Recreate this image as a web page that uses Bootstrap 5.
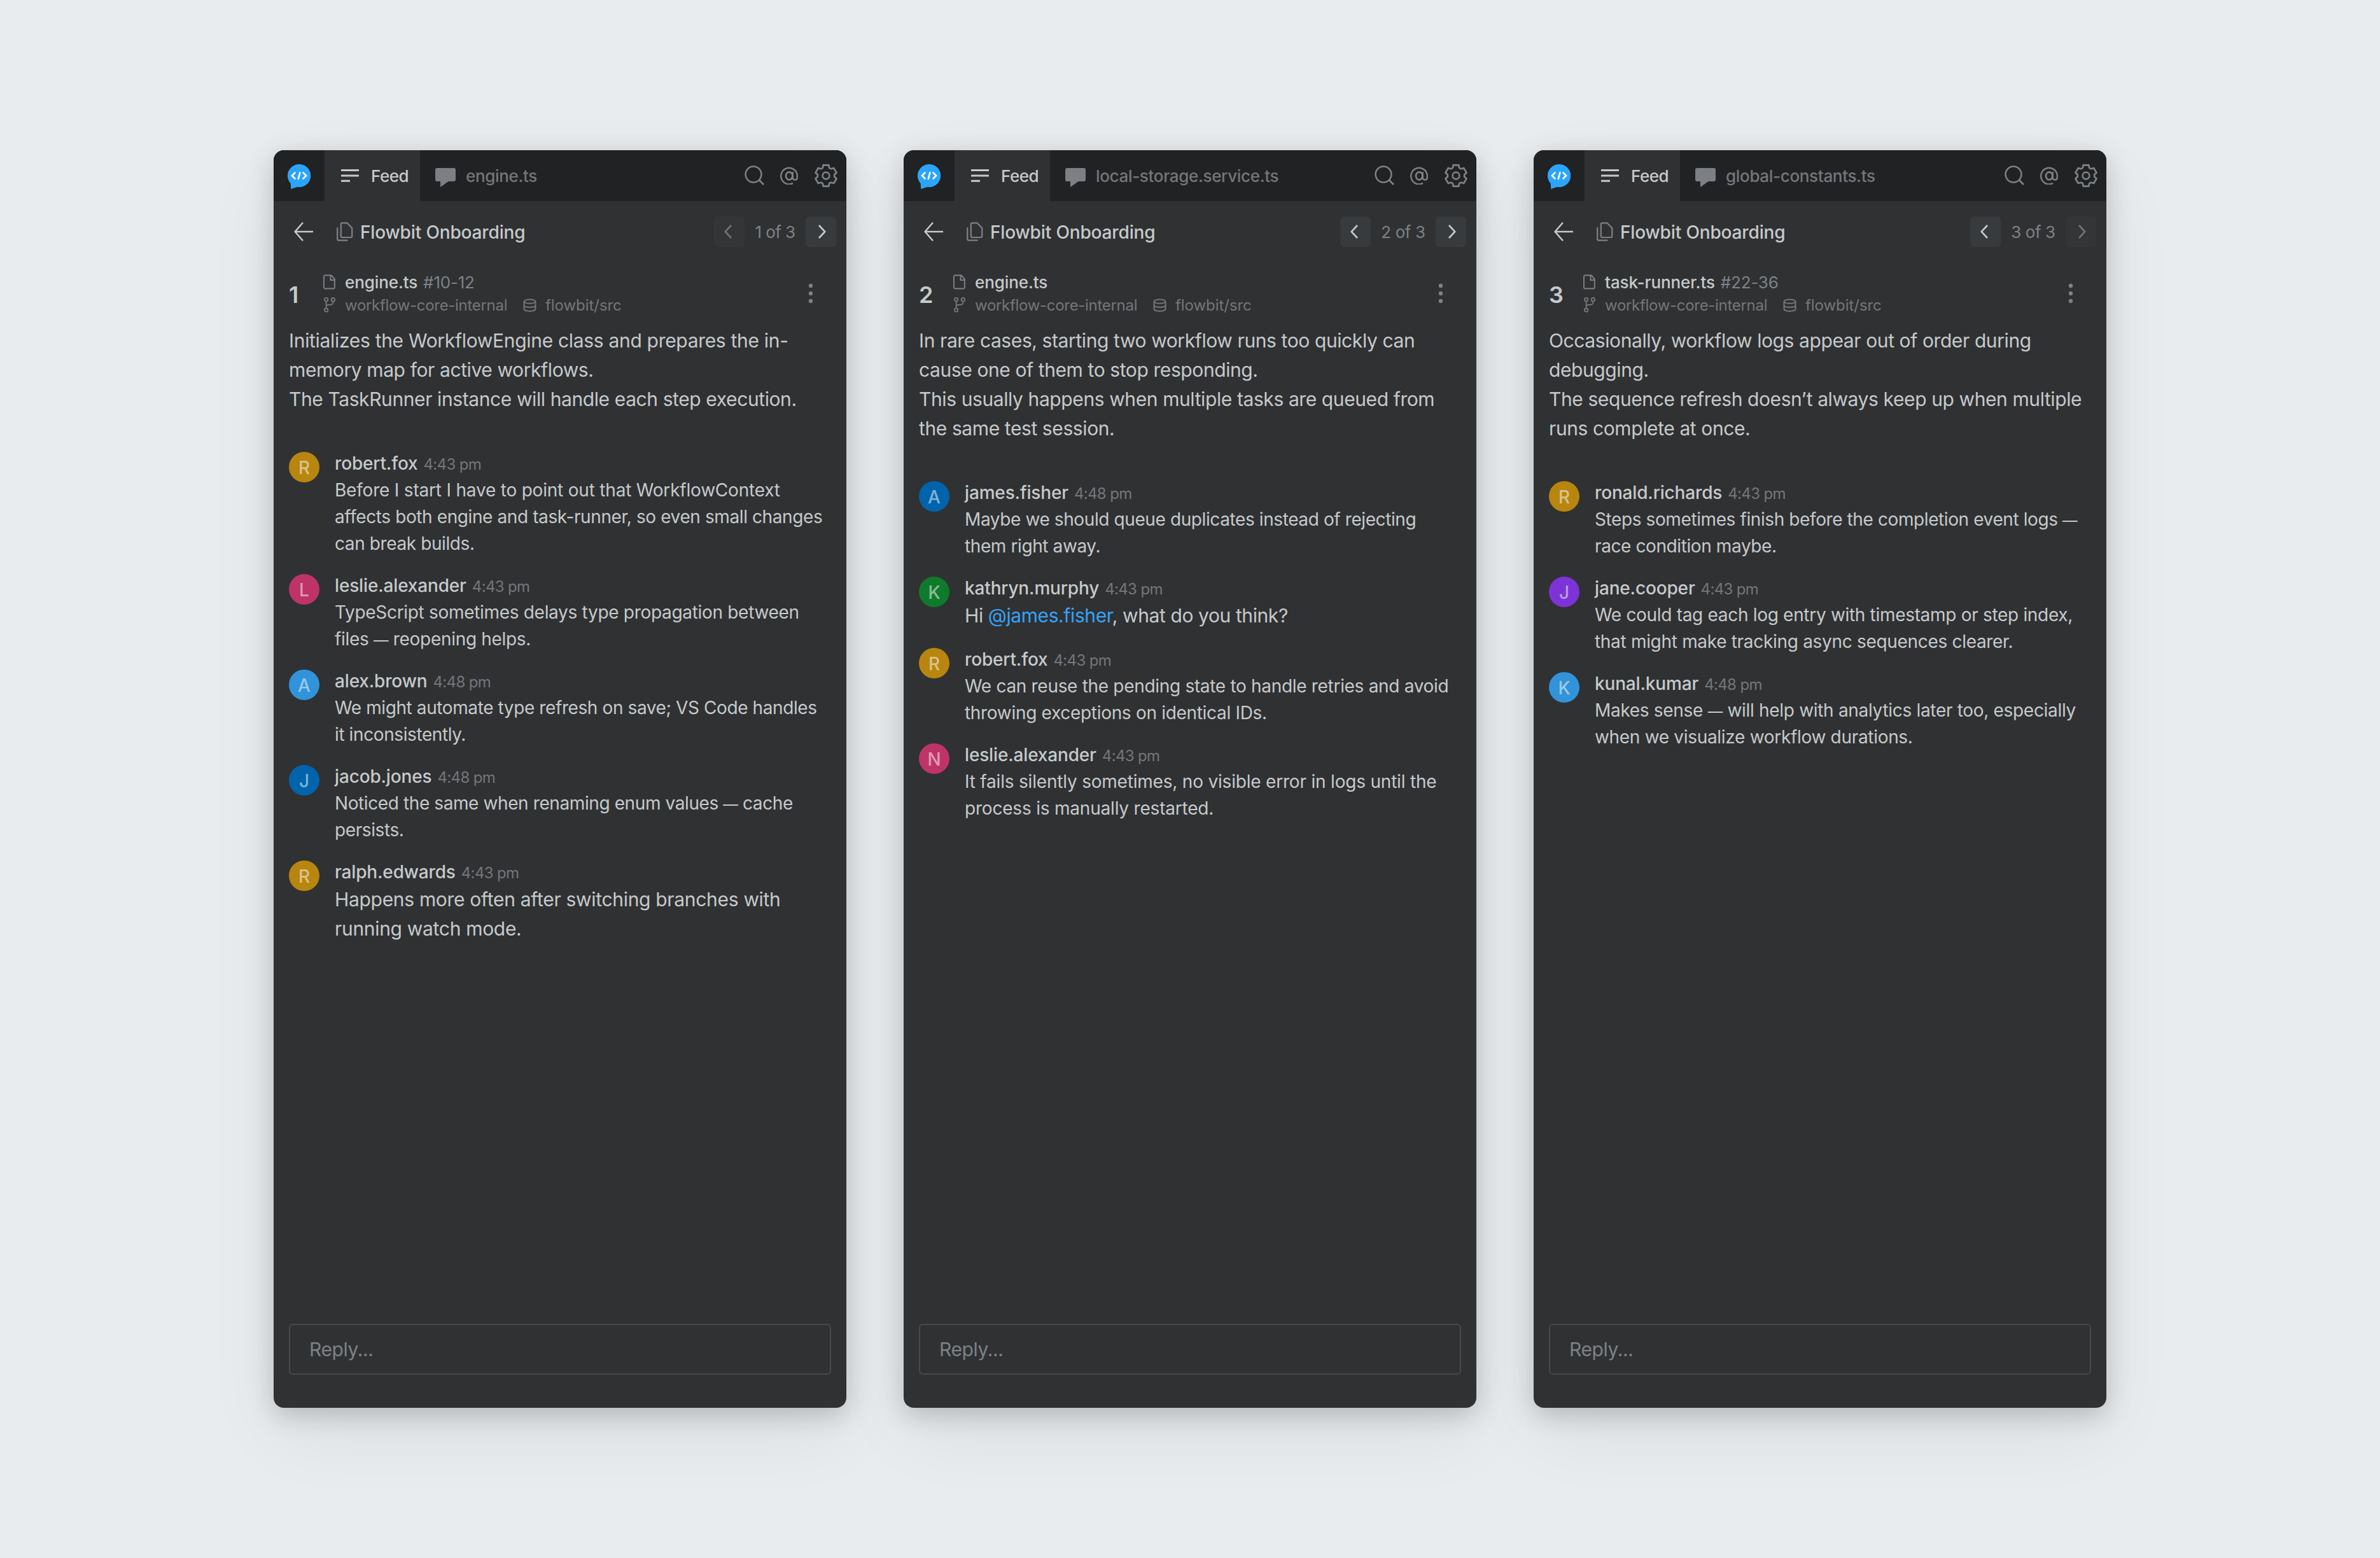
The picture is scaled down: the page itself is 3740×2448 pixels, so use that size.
<!DOCTYPE html>
<html lang="en" data-bs-theme="dark">
<head>
<meta charset="utf-8">
<meta name="viewport" content="width=device-width, initial-scale=1">
<title>Flowbit Onboarding</title>
<link href="https://cdn.jsdelivr.net/npm/bootstrap@5.3.0/dist/css/bootstrap.min.css" rel="stylesheet">
<style>
  :root { --fg: #c5cacb; --dim: #7c8286; --dimmer: #72777a; --panel: #303133; --bar: #212224; }
  body { background: #e8ecef; font-family: Inter, "Liberation Sans", sans-serif; color: var(--fg); min-height: 2448px; }
  svg { display: block; flex: none; overflow: visible; fill: none; stroke: currentColor; }
  .board { gap: 90px; padding-top: 236px; }
  .panel { width: 900px; height: 1976px; background: var(--panel); border-radius: 16px;
    box-shadow: 0 12px 40px rgba(0,0,0,.19), 0 40px 120px rgba(0,0,0,.06); white-space: nowrap; }
  .topbar { height: 80px; background: var(--bar); border-radius: 16px 16px 0 0; font-size: 26px; font-weight: 500; letter-spacing: -.33px; color: var(--dim); padding-right: 14px; }
  .brand-cell { width: 80px; }
  .tab-feed { width: 150px; padding-left: 26px; gap: 19px; background: var(--panel); color: var(--fg); letter-spacing: -.5px; }
  .tab-file { padding-left: 24px; gap: 16px; color: var(--dimmer); }
  .ico-bubble { margin-top: 6px; }
  .ico-gear { margin-left: 26px; }
  .ico-copies { margin-left: 13px; color: var(--dim); }
  .crumb { height: 96px; padding: 0 16px 0 32px; }
  .crumb-title { font-size: 28px; font-weight: 500; letter-spacing: -.15px; padding-top: 3px; margin: 0 auto 0 11px; color: var(--fg); }
  .pager-btn { width: 48px; height: 48px; border-radius: 6px; background: #373b3d; color: var(--fg); border: 0; padding: 0; }
  .pager-btn:disabled { background: #343537; color: #6f7477; opacity: 1; }
  .pager-count { width: 96px; font-size: 26px; letter-spacing: -.6px; color: var(--dim); text-align: center; }
  .pager-wide { width: 102px; letter-spacing: -.4px; }
  .marker { height: 98px; padding: 0 50px 0 24px; }
  .marker-no { width: 54px; font-size: 36px; font-weight: 600; padding-top: 4px; }
  .marker-row { height: 36px; }
  .fname { font-size: 26px; font-weight: 500; letter-spacing: -.1px; margin-left: 14px; }
  .frange { font-size: 26px; color: var(--dim); margin-left: 9px; letter-spacing: -.2px; }
  .fpath { font-size: 24px; color: var(--dimmer); letter-spacing: -.22px; margin-left: 14px; padding-top: 1px; }
  .fbranch { width: 280px; letter-spacing: -.3px; }
  .fsrc { letter-spacing: -.05px; }
  .summary { font-size: 30px; line-height: 46px; letter-spacing: -.4px; padding: 2px 0 0 24px; }
  .thread { padding: 60px 24px 0; }
  .note-item { gap: 24px; }
  .avatar { width: 48px; height: 48px; font-size: 28px; font-weight: 500; color: rgba(255,255,255,.52); padding-top: 1px; flex: none; }
  .who { font-size: 28px; font-weight: 500; letter-spacing: -.16px; line-height: 36px; height: 36px; }
  .when { font-size: 24px; letter-spacing: -.65px; color: var(--dimmer); margin-left: 9px; font-weight: 400; }
  .said { font-size: 28px; line-height: 42px; letter-spacing: -.4px; margin: 3px 0 27px; }
  .said-lg { font-size: 30px; line-height: 46px; margin: 2px 0 28px; }
  .loose { letter-spacing: -.2px; }
  .easy { letter-spacing: -.31px; }
  .dash { font-size: .84em; line-height: 0; }
  .mention { color: #34a4f9; text-decoration: none; }
  .c-amber { background: #b8860f; } .c-pink { background: #be3468; } .c-sky { background: #3193da; }
  .c-blue { background: #0064ad; } .c-green { background: #107a2c; } .c-violet { background: #7e33d8; }
  .reply-wrap { padding: 0 24px 52px; }
  .reply-box.form-control { height: 80px; border: 2px solid #47494b; border-radius: 6px; background: transparent; font-size: 30px; letter-spacing: -.4px; padding: 0 30px; }
  .reply-box::placeholder { color: var(--dim); opacity: 1; }
</style>
</head>
<body>
<svg width="0" height="0" class="position-absolute" aria-hidden="true">
  <symbol id="logo" viewBox="0 0 36 40">
    <path d="M18 0a18 18 0 1 1-3 35.7L5.3 39 4.7 30.3A18 18 0 0 1 18 0z" fill="#2ba5fc" stroke="none"/>
    <path d="M12.3 12.6 6.9 18l5.4 5.4M23.7 12.6l5.4 5.4-5.4 5.4M19.7 12.2l-3.2 11.8" stroke="#fff" stroke-width="2.6"/>
  </symbol>
  <symbol id="lines" viewBox="0 0 28 20"><path d="M0 1.5h28M0 9.9h28M0 18.3h14" stroke-width="3"/></symbol>
  <symbol id="bubble" viewBox="0 0 32 30"><path d="M3 0h26a3 3 0 0 1 3 3v15a3 3 0 0 1-3 3h-8.3L8 30v-9H3a3 3 0 0 1-3-3V3a3 3 0 0 1 3-3z" fill="#7c8084" stroke="none"/></symbol>
  <symbol id="search" viewBox="0 0 32 32"><circle cx="14" cy="14" r="12.4" stroke-width="2.5"/><path d="M22.8 22.8 30 30" stroke-width="2.7"/></symbol>
  <symbol id="at" viewBox="0 0 28 28"><path d="M20 25.9A12.8 12.8 0 1 1 26.8 14v2.200c0 2.600-1.200 4.300-3.500 4.300s-3.600-1.700-3.600-4.300V8" stroke-width="2.4"/><ellipse cx="14.200" cy="14.300" rx="5.200" ry="6" stroke-width="2.700"/></symbol>
  <symbol id="gear" viewBox="-18 -18 36 36"><path d="M-5.200-12.200-4.200-16.600H4.200L5.200-12.200 7.970-10.600 12.280-11.940 16.480-4.660 13.170-1.600V1.600L16.480 4.660 12.280 11.940 7.970 10.600 5.200 12.200 4.200 16.600H-4.200L-5.200 12.200-7.970 10.600-12.280 11.940-16.480 4.660-13.170 1.600V-1.600L-16.480-4.660-12.280-11.940-7.970-10.600z" stroke-width="2.700"/><circle r="5.400" stroke-width="2.600"/></symbol>
  <symbol id="back" viewBox="0 0 30 30"><path d="M14 .8 1.600 15 14 29.200M1.600 15H30" stroke-width="2.500"/></symbol>
  <symbol id="copies" viewBox="0 0 26 30"><path d="M8.800 1.300h7.700l7.700 8V22a2 2 0 0 1-2 2H8.800a2 2 0 0 1-2-2V3.300a2 2 0 0 1 2-2zM1.200 8.300V27a1.700 1.700 0 0 0 1.700 1.700h14.600" stroke-width="2.200"/></symbol>
  <symbol id="chev-l" viewBox="0 0 12 22"><path d="M11 1 1.700 11 11 21" stroke-width="2.600"/></symbol>
  <symbol id="chev-r" viewBox="0 0 12 22"><path d="M1 1l9.300 10L1 21" stroke-width="2.600"/></symbol>
  <symbol id="file" viewBox="0 0 20 24"><path d="M3 1.500h9.500l5.300 5.800V20.500a2 2 0 0 1-2 2H3a2 2 0 0 1-2-2v-17a2 2 0 0 1 2-2zM11.500 1.700v7.300h6.200" stroke-width="1.900"/></symbol>
  <symbol id="branch" viewBox="0 0 20 24"><circle cx="4.600" cy="3.700" r="2.700"/><circle cx="15.400" cy="3.700" r="2.700"/><circle cx="4.600" cy="20.200" r="2.700"/><path d="M4.600 6.400v11.100M15.400 6.400v1.100c0 3-1.800 4.500-4.600 4.500H8.500c-2 0-3.400.6-3.900 2"/></symbol>
  <symbol id="db" viewBox="0 0 21 21"><ellipse cx="10.500" cy="4.600" rx="9" ry="3.200"/><path d="M1.500 4.600v12c0 2 4 3.300 9 3.300s9-1.300 9-3.300v-12M1.500 10.600c0 2 4 3.200 9 3.200s9-1.200 9-3.200"/></symbol>
  <symbol id="kebab" viewBox="0 0 8 32"><g fill="currentColor" stroke="none"><circle cx="4" cy="4" r="3.200"/><circle cx="4" cy="16" r="3.200"/><circle cx="4" cy="28" r="3.200"/></g></symbol>
</svg>

<main class="board d-flex justify-content-center">

  <section class="panel d-flex flex-column">
    <nav class="topbar d-flex align-items-center">
      <div class="brand-cell d-flex justify-content-center"><svg width="36" height="40" class="mt-1"><use href="#logo"/></svg></div>
      <div class="tab-feed h-100 d-flex align-items-center"><svg width="28" height="20"><use href="#lines"/></svg><span>Feed</span></div>
      <div class="tab-file d-flex align-items-center me-auto"><svg width="32" height="30" class="ico-bubble"><use href="#bubble"/></svg><span>engine.ts</span></div>
      <svg width="32" height="32"><use href="#search"/></svg>
      <svg width="28" height="28" class="ms-4"><use href="#at"/></svg>
      <svg width="36" height="36" class="ico-gear"><use href="#gear"/></svg>
    </nav>
    <header class="crumb d-flex align-items-center">
      <svg width="30" height="30" class="me-4"><use href="#back"/></svg>
      <svg width="26" height="30" class="ico-copies"><use href="#copies"/></svg>
      <h1 class="crumb-title">Flowbit Onboarding</h1>
      <button class="btn pager-btn d-flex align-items-center justify-content-center" disabled><svg width="12" height="22" class="me-1"><use href="#chev-l"/></svg></button>
      <span class="pager-count">1 of 3</span>
      <button class="btn pager-btn d-flex align-items-center justify-content-center"><svg width="12" height="22" class="ms-1"><use href="#chev-r"/></svg></button>
    </header>
    <div class="marker d-flex align-items-center">
      <div class="marker-no">1</div>
      <div class="me-auto">
        <div class="marker-row d-flex align-items-center"><svg width="20" height="24" color="#7c8286"><use href="#file"/></svg><span class="fname">engine.ts</span><span class="frange">#10-12</span></div>
        <div class="marker-row d-flex align-items-center"><svg width="20" height="24" color="#72777a" stroke-width="1.900"><use href="#branch"/></svg><span class="fpath fbranch">workflow-core-internal</span><svg width="21" height="21" color="#72777a" stroke-width="2"><use href="#db"/></svg><span class="fpath fsrc">flowbit/src</span></div>
      </div>
      <svg width="12" height="32" color="#7c8286"><use href="#kebab"/></svg>
    </div>
    <div class="summary"><span class="easy">Initializes the WorkflowEngine class and prepares the in-</span><br>memory map for active workflows.<br>The TaskRunner instance will handle each step execution.</div>
    <div class="thread flex-grow-1">
      <article class="note-item d-flex"><div class="avatar c-amber rounded-circle d-flex align-items-center justify-content-center">R</div><div><div class="who">robert.fox<span class="when">4:43 pm</span></div><p class="said"><span class="loose">Before I start I have to point out that WorkflowContext</span><br>affects both engine and task-runner, so even small changes<br>can break builds.</p></div></article>
      <article class="note-item d-flex"><div class="avatar c-pink rounded-circle d-flex align-items-center justify-content-center">L</div><div><div class="who">leslie.alexander<span class="when">4:43 pm</span></div><p class="said easy">TypeScript sometimes delays type propagation between<br>files <span class="dash">—</span> reopening helps.</p></div></article>
      <article class="note-item d-flex"><div class="avatar c-sky rounded-circle d-flex align-items-center justify-content-center">A</div><div><div class="who">alex.brown<span class="when">4:48 pm</span></div><p class="said">We might automate type refresh on save; VS Code handles<br>it inconsistently.</p></div></article>
      <article class="note-item d-flex"><div class="avatar c-blue rounded-circle d-flex align-items-center justify-content-center">J</div><div><div class="who">jacob.jones<span class="when">4:48 pm</span></div><p class="said">Noticed the same when renaming enum values <span class="dash">—</span> cache<br>persists.</p></div></article>
      <article class="note-item d-flex"><div class="avatar c-amber rounded-circle d-flex align-items-center justify-content-center">R</div><div><div class="who">ralph.edwards<span class="when">4:43 pm</span></div><p class="said said-lg easy">Happens more often after switching branches with<br>running watch mode.</p></div></article>
    </div>
    <div class="reply-wrap"><input class="form-control reply-box" placeholder="Reply..."></div>
  </section>

  <section class="panel d-flex flex-column">
    <nav class="topbar d-flex align-items-center">
      <div class="brand-cell d-flex justify-content-center"><svg width="36" height="40" class="mt-1"><use href="#logo"/></svg></div>
      <div class="tab-feed h-100 d-flex align-items-center"><svg width="28" height="20"><use href="#lines"/></svg><span>Feed</span></div>
      <div class="tab-file d-flex align-items-center me-auto"><svg width="32" height="30" class="ico-bubble"><use href="#bubble"/></svg><span>local-storage.service.ts</span></div>
      <svg width="32" height="32"><use href="#search"/></svg>
      <svg width="28" height="28" class="ms-4"><use href="#at"/></svg>
      <svg width="36" height="36" class="ico-gear"><use href="#gear"/></svg>
    </nav>
    <header class="crumb d-flex align-items-center">
      <svg width="30" height="30" class="me-4"><use href="#back"/></svg>
      <svg width="26" height="30" class="ico-copies"><use href="#copies"/></svg>
      <h1 class="crumb-title">Flowbit Onboarding</h1>
      <button class="btn pager-btn d-flex align-items-center justify-content-center"><svg width="12" height="22" class="me-1"><use href="#chev-l"/></svg></button>
      <span class="pager-count pager-wide">2 of 3</span>
      <button class="btn pager-btn d-flex align-items-center justify-content-center"><svg width="12" height="22" class="ms-1"><use href="#chev-r"/></svg></button>
    </header>
    <div class="marker d-flex align-items-center">
      <div class="marker-no">2</div>
      <div class="me-auto">
        <div class="marker-row d-flex align-items-center"><svg width="20" height="24" color="#7c8286"><use href="#file"/></svg><span class="fname">engine.ts</span></div>
        <div class="marker-row d-flex align-items-center"><svg width="20" height="24" color="#72777a" stroke-width="1.900"><use href="#branch"/></svg><span class="fpath fbranch">workflow-core-internal</span><svg width="21" height="21" color="#72777a" stroke-width="2"><use href="#db"/></svg><span class="fpath fsrc">flowbit/src</span></div>
      </div>
      <svg width="12" height="32" color="#7c8286"><use href="#kebab"/></svg>
    </div>
    <div class="summary">In rare cases, starting two workflow runs too quickly can<br>cause one of them to stop responding.<br>This usually happens when multiple tasks are queued from<br>the same test session.</div>
    <div class="thread flex-grow-1">
      <article class="note-item d-flex"><div class="avatar c-blue rounded-circle d-flex align-items-center justify-content-center">A</div><div><div class="who">james.fisher<span class="when">4:48 pm</span></div><p class="said">Maybe we should queue duplicates instead of rejecting<br>them right away.</p></div></article>
      <article class="note-item d-flex"><div class="avatar c-green rounded-circle d-flex align-items-center justify-content-center">K</div><div><div class="who">kathryn.murphy<span class="when">4:43 pm</span></div><p class="said said-lg">Hi <a class="mention" href="#">@james.fisher</a>, what do you think?</p></div></article>
      <article class="note-item d-flex"><div class="avatar c-amber rounded-circle d-flex align-items-center justify-content-center">R</div><div><div class="who">robert.fox<span class="when">4:43 pm</span></div><p class="said easy">We can reuse the pending state to handle retries and avoid<br>throwing exceptions on identical IDs.</p></div></article>
      <article class="note-item d-flex"><div class="avatar c-pink rounded-circle d-flex align-items-center justify-content-center">N</div><div><div class="who">leslie.alexander<span class="when">4:43 pm</span></div><p class="said loose">It fails silently sometimes, no visible error in logs until the<br>process is manually restarted.</p></div></article>
    </div>
    <div class="reply-wrap"><input class="form-control reply-box" placeholder="Reply..."></div>
  </section>

  <section class="panel d-flex flex-column">
    <nav class="topbar d-flex align-items-center">
      <div class="brand-cell d-flex justify-content-center"><svg width="36" height="40" class="mt-1"><use href="#logo"/></svg></div>
      <div class="tab-feed h-100 d-flex align-items-center"><svg width="28" height="20"><use href="#lines"/></svg><span>Feed</span></div>
      <div class="tab-file d-flex align-items-center me-auto"><svg width="32" height="30" class="ico-bubble"><use href="#bubble"/></svg><span>global-constants.ts</span></div>
      <svg width="32" height="32"><use href="#search"/></svg>
      <svg width="28" height="28" class="ms-4"><use href="#at"/></svg>
      <svg width="36" height="36" class="ico-gear"><use href="#gear"/></svg>
    </nav>
    <header class="crumb d-flex align-items-center">
      <svg width="30" height="30" class="me-4"><use href="#back"/></svg>
      <svg width="26" height="30" class="ico-copies"><use href="#copies"/></svg>
      <h1 class="crumb-title">Flowbit Onboarding</h1>
      <button class="btn pager-btn d-flex align-items-center justify-content-center"><svg width="12" height="22" class="me-1"><use href="#chev-l"/></svg></button>
      <span class="pager-count pager-wide">3 of 3</span>
      <button class="btn pager-btn d-flex align-items-center justify-content-center" disabled><svg width="12" height="22" class="ms-1"><use href="#chev-r"/></svg></button>
    </header>
    <div class="marker d-flex align-items-center">
      <div class="marker-no">3</div>
      <div class="me-auto">
        <div class="marker-row d-flex align-items-center"><svg width="20" height="24" color="#7c8286"><use href="#file"/></svg><span class="fname">task-runner.ts</span><span class="frange">#22-36</span></div>
        <div class="marker-row d-flex align-items-center"><svg width="20" height="24" color="#72777a" stroke-width="1.900"><use href="#branch"/></svg><span class="fpath fbranch">workflow-core-internal</span><svg width="21" height="21" color="#72777a" stroke-width="2"><use href="#db"/></svg><span class="fpath fsrc">flowbit/src</span></div>
      </div>
      <svg width="12" height="32" color="#7c8286"><use href="#kebab"/></svg>
    </div>
    <div class="summary">Occasionally, workflow logs appear out of order during<br>debugging.<br>The sequence refresh doesn’t always keep up when multiple<br>runs complete at once.</div>
    <div class="thread flex-grow-1">
      <article class="note-item d-flex"><div class="avatar c-amber rounded-circle d-flex align-items-center justify-content-center">R</div><div><div class="who">ronald.richards<span class="when">4:43 pm</span></div><p class="said">Steps sometimes finish before the completion event logs <span class="dash">—</span><br>race condition maybe.</p></div></article>
      <article class="note-item d-flex"><div class="avatar c-violet rounded-circle d-flex align-items-center justify-content-center">J</div><div><div class="who">jane.cooper<span class="when">4:43 pm</span></div><p class="said easy">We could tag each log entry with timestamp or step index,<br>that might make tracking async sequences clearer.</p></div></article>
      <article class="note-item d-flex"><div class="avatar c-sky rounded-circle d-flex align-items-center justify-content-center">K</div><div><div class="who">kunal.kumar<span class="when">4:48 pm</span></div><p class="said easy">Makes sense <span class="dash">—</span> will help with analytics later too, especially<br>when we visualize workflow durations.</p></div></article>
    </div>
    <div class="reply-wrap"><input class="form-control reply-box" placeholder="Reply..."></div>
  </section>

</main>
<script src="https://cdn.jsdelivr.net/npm/bootstrap@5.3.0/dist/js/bootstrap.bundle.min.js"></script>
</body>
</html>
